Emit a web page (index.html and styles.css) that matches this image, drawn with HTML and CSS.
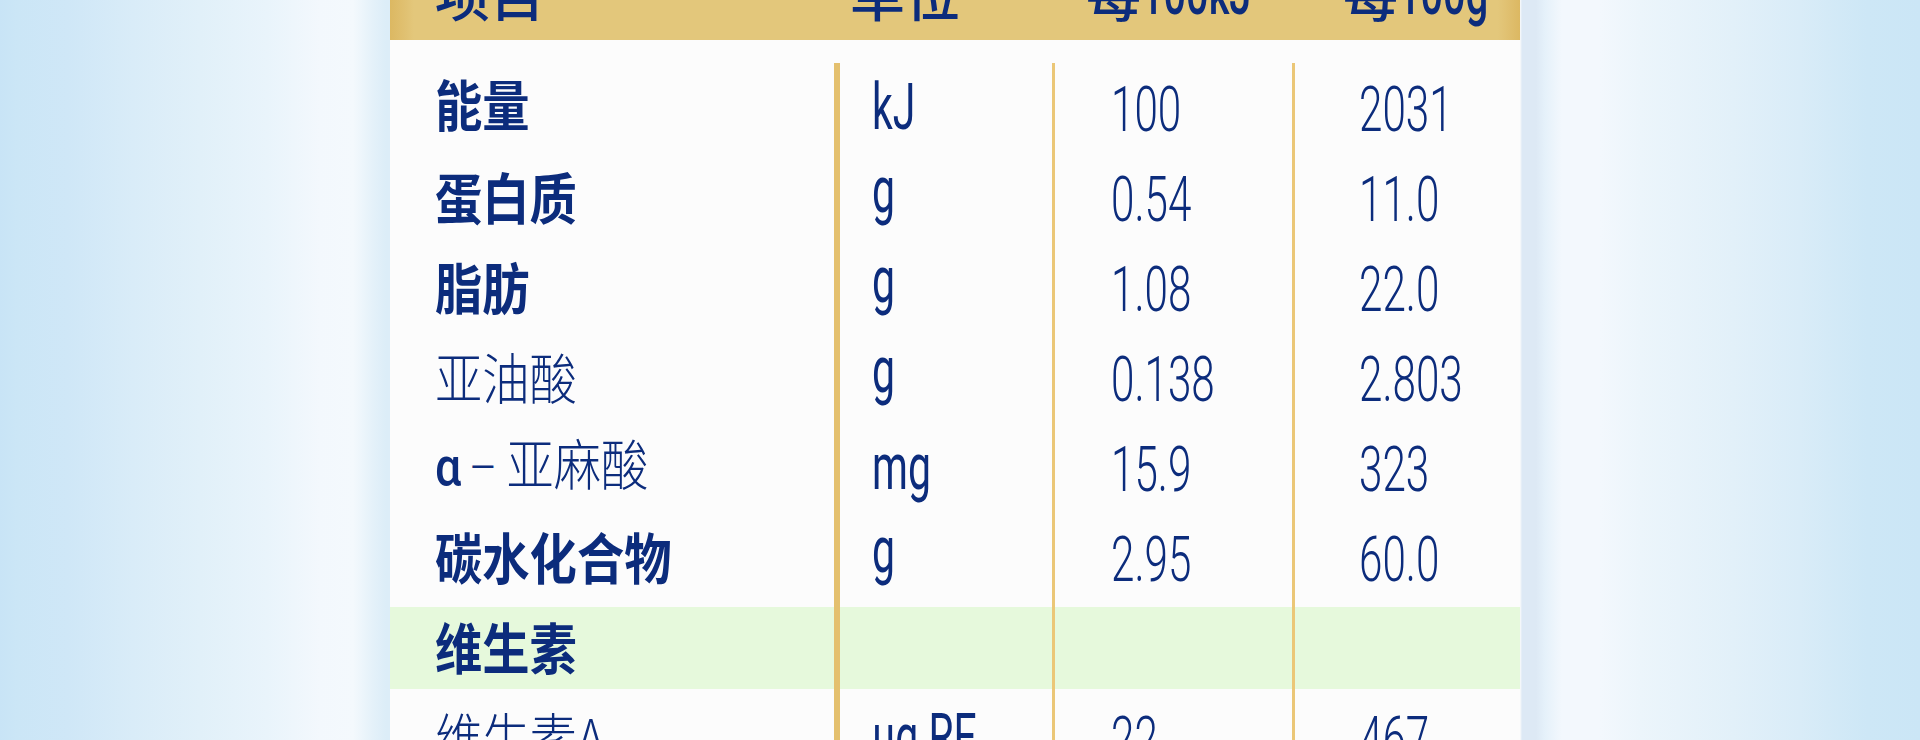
FILE: index.html
```html
<!DOCTYPE html>
<html lang="zh-CN">
<head>
<meta charset="utf-8">
<title>营养成分表</title>
<link rel="stylesheet" href="styles.css">
</head>
<body>
<div class="page">
  <div class="card">
    <div class="thead">
      <div class="th c1">项目</div>
      <div class="th c2">单位</div>
      <div class="th c3">每<span class="thn">100kJ</span></div>
      <div class="th c4">每<span class="thn">100g</span></div>
    </div>
    <div class="tbody">
      <div class="row">
        <div class="cell c1 first"><span class="name bold">能量</span></div>
        <div class="cell c2"><span class="unit">kJ</span></div>
        <div class="cell c3"><span class="num">100</span></div>
        <div class="cell c4"><span class="num">2031</span></div>
      </div>
      <div class="row">
        <div class="cell c1"><span class="name bold">蛋白质</span></div>
        <div class="cell c2 low"><span class="unit">g</span></div>
        <div class="cell c3"><span class="num">0.54</span></div>
        <div class="cell c4"><span class="num">11.0</span></div>
      </div>
      <div class="row">
        <div class="cell c1"><span class="name bold">脂肪</span></div>
        <div class="cell c2 low"><span class="unit">g</span></div>
        <div class="cell c3"><span class="num">1.08</span></div>
        <div class="cell c4"><span class="num">22.0</span></div>
      </div>
      <div class="row">
        <div class="cell c1"><span class="name light">亚油酸</span></div>
        <div class="cell c2 low"><span class="unit">g</span></div>
        <div class="cell c3"><span class="num">0.138</span></div>
        <div class="cell c4"><span class="num">2.803</span></div>
      </div>
      <div class="row">
        <div class="cell c1"><span class="name light"><span class="alpha">α</span><span class="dash">–</span>亚麻酸</span></div>
        <div class="cell c2"><span class="unit">mg</span></div>
        <div class="cell c3"><span class="num">15.9</span></div>
        <div class="cell c4"><span class="num">323</span></div>
      </div>
      <div class="row">
        <div class="cell c1"><span class="name bold">碳水化合物</span></div>
        <div class="cell c2 low"><span class="unit">g</span></div>
        <div class="cell c3"><span class="num">2.95</span></div>
        <div class="cell c4"><span class="num">60.0</span></div>
      </div>
      <div class="row section">
        <div class="cell c1"><span class="name bold">维生素</span></div>
        <div class="cell c2"></div>
        <div class="cell c3"></div>
        <div class="cell c4"></div>
      </div>
      <div class="row">
        <div class="cell c1"><span class="name light">维生素A</span></div>
        <div class="cell c2"><span class="unit">μg RE</span></div>
        <div class="cell c3"><span class="num">22</span></div>
        <div class="cell c4"><span class="num">467</span></div>
      </div>
    </div>
  </div>
</div>
</body>
</html>
```
FILE: styles.css
```css
* {
  box-sizing: border-box;
  margin: 0;
  padding: 0;
}

html, body {
  width: 1920px;
  height: 740px;
  overflow: hidden;
}

body {
  font-family: "Noto Sans CJK SC", "Noto Sans", sans-serif;
  color: #0c2c7c;
  background: linear-gradient(to right,
    #c8e4f6 0px,
    #cbe6f6 17px,
    #cfe7f7 67px,
    #d9ecf8 133px,
    #e1f0f9 200px,
    #e9f4fb 267px,
    #f3f8fd 320px,
    #f4f9fd 353px,
    #e4f1f9 373px,
    #dcedf8 386px,
    #dcedf8 390px,
    #fcfcfc 390px,
    #fcfcfc 1520px,
    #dde9f5 1522px,
    #dde9f5 1536px,
    #e5f1fa 1545px,
    #f3f8fd 1562px,
    #f3f8fd 1600px,
    #ecf5fb 1640px,
    #e2f0f9 1733px,
    #d9ecf8 1800px,
    #cde7f6 1867px,
    #cbe6f6 1920px);
}

.page {
  display: flex;
  padding-left: 390px;
}

.card {
  width: 1130px;
  margin-top: -60px;
  background: #fcfcfc;
}

/* header */
.thead {
  display: flex;
  height: 100px;
  background: linear-gradient(to right,
    #dcb862 0px,
    #e0c070 14px,
    #e3c77b 24px,
    #e3c77b 1108px,
    #e0c070 1118px,
    #dcb862 1130px);
}

.th {
  display: flex;
  align-items: flex-end;
  padding-bottom: 20px;
  font-size: 55px;
  line-height: 55px;
  font-weight: 500;
  white-space: nowrap;
}

.th.c1 { width: 444px; padding-left: 45px; }
.th.c2 { width: 218px; padding-left: 16px; }
.th.c3 { width: 240px; padding-left: 34px; }
.th.c4 { width: 228px; padding-left: 51px; }

.thn {
  display: inline-block;
  font-family: Roboto, "Noto Sans", sans-serif;
  font-weight: 500;
  font-size: 62px;
  line-height: 55px;
  transform: scaleX(0.64);
  transform-origin: 0 50%;
}

/* body */
.tbody {
  padding-top: 23px;
}

.row {
  display: flex;
  height: 90px;
}

.row.section {
  background: linear-gradient(to bottom,
    transparent 0px,
    transparent 4px,
    #e6f9dc 4px,
    #e6f9dc 86px,
    transparent 86px);
}

.cell {
  display: flex;
  align-items: center;
  white-space: nowrap;
}

.cell.c1 { width: 444px; padding-left: 45px; padding-bottom: 6px; }
.cell.c1.first { padding-bottom: 12px; }
.cell.c2 { width: 218px; padding-left: 32px; border-left: 6px solid #e4c06e; }
.cell.c3 { width: 240px; padding-left: 56px; padding-top: 4px; border-left: 3px solid #ebc777; }
.cell.c4 { width: 228px; padding-left: 64px; padding-top: 4px; border-left: 3px solid #ebc777; }

.cell.low { padding-bottom: 14px; }

.name {
  display: inline-block;
  font-size: 55px;
  line-height: 55px;
  transform: scaleX(0.86);
  transform-origin: 0 50%;
}

.name.bold { font-weight: 700; }
.name.light { font-weight: 300; }

.alpha {
  font-family: Roboto, "Noto Sans", sans-serif;
  font-weight: 500;
  font-size: 54px;
  margin-right: 9px;
}

.dash {
  font-family: Roboto, "Noto Sans", sans-serif;
  font-weight: 300;
  font-size: 50px;
  margin-right: 11px;
}

.unit {
  display: inline-block;
  font-family: Roboto, "Noto Sans", sans-serif;
  font-weight: 400;
  font-size: 64px;
  line-height: 90px;
  transform: scaleX(0.64);
  transform-origin: 0 50%;
}

.num {
  display: inline-block;
  font-family: Roboto, "Noto Sans", sans-serif;
  font-weight: 300;
  font-size: 63px;
  line-height: 90px;
  transform: scaleX(0.67);
  transform-origin: 0 50%;
}
```
